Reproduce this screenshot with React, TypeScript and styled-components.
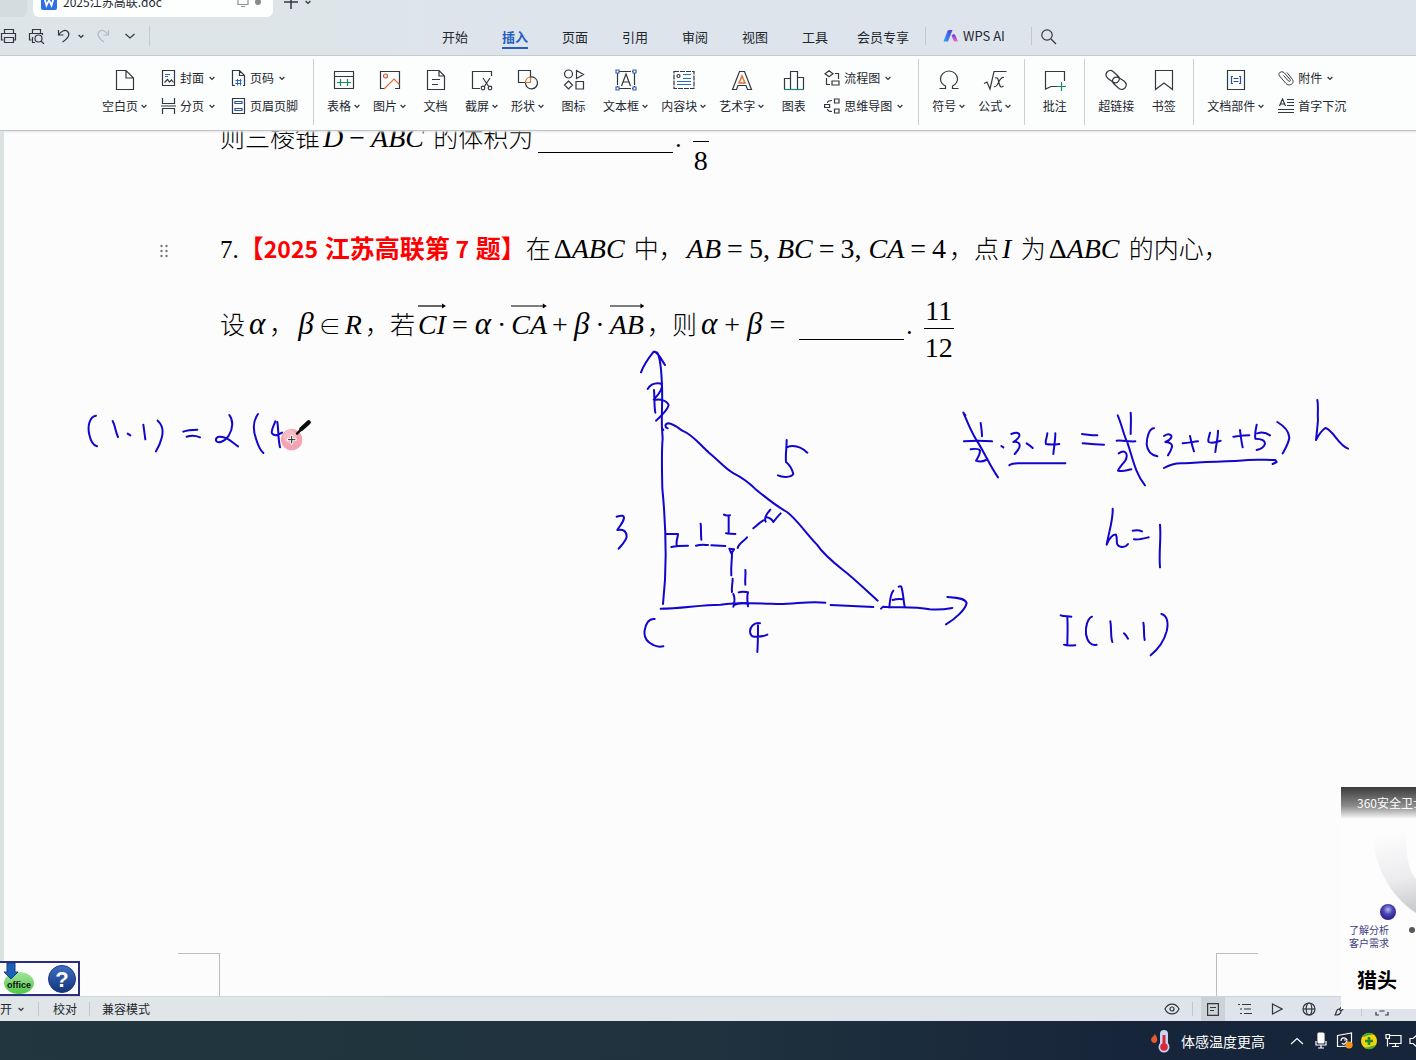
import React from "react";
import styled, { createGlobalStyle, css } from "styled-components";

const uiFont = `"Noto Sans CJK SC", "Noto Sans", sans-serif`;
const docFont = `"Liberation Serif", "Noto Sans CJK SC", serif`;
const ink = "#1206cc";
const line = "#33383f";

const GlobalStyle = createGlobalStyle`
  * { box-sizing: border-box; }
  body { margin: 0; background: #fcfcfd; overflow: hidden; }
  button { font: inherit; color: inherit; background: none; border: 0; padding: 0; margin: 0; cursor: pointer; }
  svg { display: block; flex: none; }
`;

const Window = styled.div`
  position: relative;
  display: flex;
  flex-direction: column;
  height: 100vh;
  overflow: hidden;
  font: 12px/18px ${uiFont};
  color: #23272e;
`;

/* ---------- title bar ---------- */
const TitleBar = styled.header`
  display: flex;
  align-items: flex-end;
  height: 17px;
  flex: none;
  overflow: hidden;
  background: linear-gradient(90deg, #dde5e8 0, #dde5e8 300px, #dee4ec 480px);
`;
const PreviousTab = styled.div`
  width: 27px;
  height: 30px;
  margin-right: 6px;
  border-radius: 0 0 6px 0;
  background: #d5dce0;
`;
const FileTab = styled.button`
  display: flex;
  align-items: center;
  gap: 6px;
  width: 240px;
  height: 30px;
  padding: 0 12px 0 8px;
  border-radius: 0 0 6px 6px;
  background: #fdfefe;
  text-align: left;
`;
const FileName = styled.span`
  flex: 1;
`;
const NewTab = styled.button`
  display: flex;
  align-items: center;
  gap: 6px;
  height: 30px;
  padding-left: 10px;
`;

/* ---------- menu bar ---------- */
const MenuBar = styled.div`
  display: flex;
  align-items: center;
  height: 39px;
  flex: none;
  border-bottom: 1px solid #c3c8cf;
  background: linear-gradient(90deg, #dde5e8 0, #dde5e8 300px, #dee4ec 480px);
  font-size: 13px;
`;
const QuickBar = styled.div`
  display: flex;
  align-items: center;
  width: 150px;
  height: 20px;
  gap: 11px;
  border-right: 1px solid #c5cbd1;
`;
const QuickButton = styled.button`
  display: flex;
  align-items: center;
  gap: 6px;
`;
const Menu = styled.nav`
  display: flex;
  align-items: center;
  height: 100%;
  margin-left: 275px;
`;
const MenuItem = styled.button<{ $active?: boolean }>`
  min-width: 60px;
  padding: 0 12px;
  line-height: 20px;
  white-space: nowrap;
  ${(p) =>
    p.$active &&
    css`
      color: #2460bd;
      font-weight: 700;
    `}
  span {
    display: inline-block;
    padding-top: 4px;
    border-bottom: 2px solid ${(p) => (p.$active ? "#2460bd" : "transparent")};
  }
`;
const Divider = styled.i<{ $h: number; $gap: number }>`
  width: 1px;
  height: ${(p) => p.$h}px;
  margin: 0 ${(p) => p.$gap}px;
  flex: none;
  background: #c3c8ce;
`;
const AiButton = styled.button`
  display: flex;
  align-items: center;
  gap: 4px;
  padding: 0 22px 0 13px;
  white-space: nowrap;
`;

/* ---------- ribbon ---------- */
const Ribbon = styled.div`
  position: relative;
  z-index: 1;
  display: flex;
  align-items: center;
  gap: 13px;
  height: 75px;
  flex: none;
  padding: 0 0 2px 102px;
  border-bottom: 1px solid #bfc3c7;
  box-shadow: 0 1px 2px #e4e5e7;
  background: #fcfdfd;
`;
const RibbonItem = styled.button`
  display: flex;
  flex-direction: column;
  align-items: center;
  gap: 6px;
  min-width: 33px;
  white-space: nowrap;
`;
const RibbonStack = styled.div`
  display: flex;
  flex-direction: column;
  gap: 10px;
  padding: 0 2px 0 1px;
`;
const RibbonRow = styled.button`
  display: flex;
  align-items: center;
  gap: 4px;
  white-space: nowrap;
`;
const Label = styled.span<{ $gap: number }>`
  display: flex;
  align-items: center;
  gap: ${(p) => p.$gap}px;
`;
const RibbonRule = styled.i`
  width: 1px;
  height: 66px;
  flex: none;
  background: #cdd0d4;
`;

/* ---------- document ---------- */
const Page = styled.main`
  position: relative;
  display: flex;
  flex-direction: column;
  flex: 1;
  min-height: 0;
  overflow: hidden;
  background: linear-gradient(90deg, #dbe2e1 4px, #fcfcfd 4px);
`;
const Body = styled.article`
  padding-left: 220px;
  margin-top: -30px;
  font: 300 25px/76px ${docFont};
  color: #000;
  white-space: nowrap;
`;
const Para = styled.p<{ $after?: number }>`
  position: relative;
  margin: 0 0 ${(p) => p.$after ?? 0}px;
  height: 76px;
`;
const M = styled.span`
  margin: 0 3px;
  font-size: 28px;
  line-height: 1;
`;
const Op = styled.span`
  margin: 0 6px;
`;
const Member = styled.span`
  margin: 0 4px;
  font-size: 22px;
`;
const Greek = styled.i`
  margin: 0 1px;
  font-size: 31px;
  line-height: 1;
`;
const Dot = styled.span`
  margin: 0 5px;
`;
const Source = styled.strong`
  color: #f00;
  font-family: "Noto Sans CJK SC", sans-serif;
  font-size: 25px;
  line-height: 1;
  font-weight: 700;
`;
const Digits = styled.span`
  margin-right: 1px;
  font-size: 23px;
`;
const Blank = styled.span<{ $w: number }>`
  display: inline-block;
  width: ${(p) => p.$w}px;
  height: 30px;
  margin: 0 2px 0 5px;
  vertical-align: -6px;
  border-bottom: 1px solid #000;
`;
const FracBox = styled.span`
  display: inline-flex;
  flex-direction: column;
  margin-left: 5px;
  vertical-align: middle;
  text-align: center;
  font-size: 28px;
  line-height: 38px;
  span {
    height: 36px;
    padding: 0 1px;
  }
  span + span {
    border-top: 1px solid #000;
  }
`;
const VecBox = styled.span`
  position: relative;
  svg {
    position: absolute;
    left: 0;
    top: -6px;
    width: 100%;
    height: 6px;
  }
`;
const Handle = styled.button`
  position: absolute;
  left: -60px;
  top: 32px;
`;
const CropRow = styled.div`
  display: flex;
  justify-content: space-between;
  margin-top: auto;
  padding: 0 158px 0 178px;
`;
const CropMark = styled.i<{ $side: "left" | "right" }>`
  width: 42px;
  height: 43px;
  border-top: 1px solid #bcbcbc;
  border-${(p) => p.$side}: 1px solid #bcbcbc;
`;
const InkLayer = styled.svg`
  position: absolute;
  top: 0;
  left: 0;
  pointer-events: none;
  fill: none;
  stroke: ${ink};
  stroke-width: 6;
  stroke-linecap: round;
  stroke-linejoin: round;
`;
const OfficeBar = styled.aside`
  position: absolute;
  left: 0;
  bottom: 0;
  display: flex;
  align-items: center;
  gap: 12px;
  width: 80px;
  height: 35px;
  padding-left: 3px;
  border: 2px solid #2c2f80;
  border-left: 0;
  background: #fdfdfe;
`;

/* ---------- status bar ---------- */
const StatusBar = styled.footer`
  display: flex;
  align-items: center;
  justify-content: space-between;
  height: 25px;
  flex: none;
  padding-right: 22px;
  border-top: 1px solid #cfd4d8;
  background: linear-gradient(90deg, #e0e5e7, #dfe4ec);
`;
const StatusGroup = styled.div<{ $gap: number }>`
  display: flex;
  align-items: center;
  gap: ${(p) => p.$gap}px;
`;
const StatusButton = styled.button`
  display: flex;
  align-items: center;
  gap: 6px;
`;
const ViewButton = styled.button<{ $active?: boolean }>`
  display: grid;
  place-items: center;
  width: 24px;
  height: 24px;
  background: ${(p) => (p.$active ? "#cdd2d8" : "transparent")};
`;

/* ---------- task bar ---------- */
const TaskBar = styled.footer`
  display: flex;
  align-items: center;
  justify-content: flex-end;
  height: 39px;
  flex: none;
  background: linear-gradient(90deg, #21363e, #1f323e 50%, #17253a 80%);
  color: #fff;
`;
const Weather = styled.button`
  display: flex;
  align-items: center;
  gap: 10px;
  margin-right: 20px;
  font-size: 14px;
  line-height: 20px;
  white-space: nowrap;
`;
const Tray = styled.div`
  display: flex;
  margin-right: -13px;
`;
const TrayButton = styled.button`
  display: grid;
  place-items: center;
  width: 24px;
  height: 39px;
`;

/* ---------- pop-up ---------- */
const Popup = styled.aside`
  position: absolute;
  z-index: 2;
  right: 0;
  bottom: 51px;
  width: 75px;
  height: 222px;
  overflow: hidden;
  background: #fdfdfe;
`;
const PopupTitle = styled.div`
  height: 32px;
  padding-left: 16px;
  background: linear-gradient(#3a3a3a, #8c8c8c 60%, #fdfdfe);
  color: #fff;
  line-height: 32px;
  white-space: nowrap;
`;
const PopupLink = styled.a`
  display: block;
  padding-left: 8px;
  color: #3d3a7c;
  font-size: 10px;
  line-height: 13px;
  text-decoration: none;
`;
const PopupArt = styled.svg`
  margin-bottom: -12px;
`;
const PopupHeadline = styled.a`
  display: block;
  padding: 16px 0 0 16px;
  color: #000;
  font-size: 20px;
  line-height: 30px;
  font-weight: 700;
  text-decoration: none;
`;

/* ---------- icons ---------- */
type IconProps = { w?: number; h?: number; children: React.ReactNode; color?: string };
const Icon = ({ w = 22, h = 22, children, color = line }: IconProps) => (
  <svg width={w} height={h} viewBox={`0 0 ${w} ${h}`} fill="none" stroke={color} strokeWidth="1.2" aria-hidden="true">
    {children}
  </svg>
);
const Chevron = () => (
  <Icon w={6} h={5}>
    <path d="M.6 1 3 3.4 5.4 1" strokeWidth="1.3" />
  </Icon>
);

const icons = {
  blank: (
    <Icon>
      <path d="M2.500 1.500H12L19.500 9V20.500H2.500ZM12 1.500V9H19.500" />
    </Icon>
  ),
  table: (
    <Icon>
      <path d="M1.500 2.500h19v17h-19zM1.500 7.500h19" />
      <path d="M4 13.500h14M7.500 10v7M14.500 10v7" stroke="#1c8a5a" />
    </Icon>
  ),
  picture: (
    <Icon>
      <path d="M6 19.500H1.500v-17h19v17H16" />
      <circle cx="6.500" cy="7" r="2" stroke="#d4562c" />
      <path d="M5 20 15 10l5.500 5.500" stroke="#d9713c" />
    </Icon>
  ),
  doc: (
    <Icon>
      <path d="M2.500 1.500H14L19.500 7V20.500H2.500ZM14 1.500V7H19.500M7 10.500h8M7 15.500h6" />
    </Icon>
  ),
  capture: (
    <Icon>
      <path d="M9 19.500H1.500v-17h19V7" />
      <path d="m12 9 6 9M19 9l-6 9" />
      <circle cx="12" cy="19" r="1.800" />
      <circle cx="19" cy="19" r="1.800" />
    </Icon>
  ),
  shape: (
    <Icon>
      <path d="M8 13.500H1.500v-12h12V8" />
      <path d="M13.500 8v5.500H8" stroke="#d9713c" />
      <path d="M13.500 8A6 6 0 1 1 8.500 14" />
      <path d="M8.500 13A6 6 0 0 1 13 8" stroke="#d9713c" />
    </Icon>
  ),
  glyphs: (
    <Icon>
      <circle cx="5.500" cy="5" r="4" />
      <path d="m13.500 1.500 7 4-7 4zM5.500 12l4 4-4 4-4-4zM13 12.500h7.500v7.500H13z" />
    </Icon>
  ),
  textbox: (
    <Icon>
      <path d="M4 2.500h14M4 19.500h14M2.500 4v14M19.500 4v14" strokeDasharray="12 1" />
      <path d="M6.500 17 11 5l4.500 12M8 13h6" />
      <g fill="#fff" stroke="#3a62b4">
        <path d="M1 1h3v3H1zM18 1h3v3h-3zM1 18h3v3H1zM18 18h3v3h-3z" />
      </g>
    </Icon>
  ),
  block: (
    <Icon>
      <path d="M1 2.500h20v17H1z" strokeDasharray="5 1" />
      <circle cx="5.500" cy="7" r="1.500" />
      <path d="M10 5.500h8M10 9.500h8M4 12.500h14M4 15.500h14" stroke="#2d66c4" />
    </Icon>
  ),
  art: (
    <Icon>
      <path d="M1.500 20.500 8.500 2.500h5l7 18h-4l-1.500-4H7l-1.500 4z" />
      <path d="m11 7 3 7H8z" stroke="#d97234" strokeWidth="1.500" />
      <path d="M1 20.500h5M16 20.500h5" />
    </Icon>
  ),
  chart: (
    <Icon>
      <path d="M1.500 20V9.500h6V20M7.500 20V2.500h7V20M14.500 8.500h6V20" />
      <path d="M1 20.500h20" stroke="#1c8a7a" />
    </Icon>
  ),
  omega: (
    <Icon>
      <path d="M1.500 19.500h6v-2.500C3.500 15 2.500 12.500 2.500 10a8.500 8 0 0 1 17 0c0 2.500-1 5-5 7v2.500h6" />
    </Icon>
  ),
  formula: (
    <Icon w={24}>
      <path d="M1 14.500l3-1.500 3 7 4-17.500h12.500" />
      <path d="M12 9c3-1 3 1 4 5s2 5 4.500 3M21 8.500c-3-1-5 4-6 6s-2 4-4 3" />
    </Icon>
  ),
  comment: (
    <Icon>
      <path d="M13 17.500H7L1.500 20V2.500h19V12" />
      <path d="M13 17.500h9M17.500 13v9" stroke="#1c8a5a" />
    </Icon>
  ),
  link: (
    <Icon w={24}>
      <path d="M11 14.500 4 9.500C-1 5 5-1 9 2.500l5 4.500c3 3 0 8-4 6.500" />
      <path d="M13 7.500l7 4.500c5 4 0 11-5 7.500l-5-4.500c-3-3-1-8 4-6.500" />
    </Icon>
  ),
  bookmark: (
    <Icon>
      <path d="M2.500 1.500h17v19L11 14l-8.500 6.500z" />
    </Icon>
  ),
  parts: (
    <Icon>
      <path d="M2.500 1.500h17v19h-17z" />
      <path d="M8 7.500H6.500v7H8M14 7.500h1.500v7H14M8.500 9.500h5M8.500 12.500h5" stroke="#2c4fa3" />
    </Icon>
  ),
  cover: (
    <Icon w={15} h={16}>
      <path d="M1.500.5h12v15h-12z" />
      <path d="M4 4.500h5M4 6.500h3" stroke="#2d66c4" />
      <path d="m3.500 12.500 3-3 2 2.500 2-2 2 2.500" />
    </Icon>
  ),
  split: (
    <Icon w={15} h={16}>
      <path d="M1.500 0v5.500h12V0M1.500 16v-5.500h12V16M0 8h15" />
    </Icon>
  ),
  number: (
    <Icon w={15} h={16}>
      <path d="M4 15.500H1.500V.5h7l5 5v10H12M8.500.5v5h5" />
      <path d="M4.500 10.500h6M4.500 13.500h6M6.500 9v6.500M9.500 9v6.500" stroke="#2d66c4" strokeWidth="1" />
    </Icon>
  ),
  headfoot: (
    <Icon w={15} h={16}>
      <path d="M1.500.5h12v15h-12z" />
      <path d="M4 3.500h7v2H4zM4 10.500h7v2H4z" stroke="#2d4f9e" />
    </Icon>
  ),
  flow: (
    <Icon w={16} h={16}>
      <path d="m5 .8 4 3-4 3-4-3zM11 3.500h3.500V9M2.500 8v6.500H6M8 11h7v4H8z" />
    </Icon>
  ),
  mind: (
    <Icon w={16} h={16}>
      <path d="M.6 6.500h5v3h-5zM10.500 1h4.500v4h-4.500zM10.500 11h4.500v4h-4.500zM3.500 5c0-2 2-2.500 4.500-2.500M3.500 11c0 2 2 2.500 4.500 2.500" />
    </Icon>
  ),
  clip: (
    <Icon w={16} h={16}>
      <path
        d="m5.500 5.500 5 5.500c1 1 2.500 0 1.500-1.500L6.500 3C3.500 0-.5 3 1.500 6L8 13.500c3 3.500 9 0 6.500-4L9 2.500"
        strokeWidth="1"
      />
    </Icon>
  ),
  dropcap: (
    <Icon w={16} h={16}>
      <path d="m1.500 8 3-7 3 7M2.500 6h4M9 1.500h7M9 4.500h7M9 7.500h7M0 11.500h16M0 14.500h16" />
    </Icon>
  ),
};

type Item = { icon: keyof typeof icons; text: string; drop?: boolean };
const Tool = ({ icon, text, drop }: Item) => (
  <RibbonItem>
    {icons[icon]}
    <Label $gap={3}>
      {text}
      {drop && <Chevron />}
    </Label>
  </RibbonItem>
);
const Stack = ({ items }: { items: Item[] }) => (
  <RibbonStack>
    {items.map((it) => (
      <RibbonRow key={it.text}>
        {icons[it.icon]}
        <Label $gap={5}>
          {it.text}
          {it.drop && <Chevron />}
        </Label>
      </RibbonRow>
    ))}
  </RibbonStack>
);

const Frac = ({ top, bottom }: { top: string; bottom: string }) => (
  <FracBox>
    <span>{top}</span>
    <span>{bottom}</span>
  </FracBox>
);
const Vec = ({ children, w }: { children: string; w: number }) => (
  <VecBox>
    <i>{children}</i>
    <svg viewBox={`0 0 ${w} 6`} preserveAspectRatio="none" aria-hidden="true">
      <path d={`M0 3H${w - 2}`} stroke="#000" strokeWidth="1.200" />
      <path d={`M${w - 4} .5 ${w} 3l-4 2.500z`} fill="#000" />
    </svg>
  </VecBox>
);

const Handwriting = () => (
  <InkLayer width="1416" height="865" viewBox="0 131 1416 865" aria-hidden="true">
    <svg x="60" y="390" width="280" height="90" viewBox="0 0 840 270">
      <path d="M108 77C88 80 82 110 88 134c4 18 12 32 23 35M158 93c8 14 8 32 16 48M203 131l8 5M250 104l6 44M293 92c14 12 18 30 12 52-4 16-10 28-17 40M370 125c12-5 26-6 42-6M380 140c14-4 26-4 40 2M508 75c12 16 12 40-2 62-12 18-34 26-38 14-2-12 16-14 32-6 12 6 22 16 34 24M594 72c-14 20-16 46-6 74 6 20 12 34 22 43M646 94c-6 16-14 28-10 36 6 8 18 6 30-2M652 96c4 26 2 50 8 76" />
      <circle cx="695" cy="149" r="32" fill="#f4a3b2" stroke="none" />
      <circle cx="690" cy="140" r="20" fill="#f8bcc6" stroke="none" />
      <path d="M684 149h22M695 138v22" stroke="#fff" strokeWidth="8" />
      <path d="M685 149h20M695 139v20" stroke="#222" strokeWidth="3" />
      <path d="m724 117 22-20" stroke="#0b0b0b" strokeWidth="13" />
      <path d="m711 131 12-12" stroke="#0b0b0b" strokeWidth="7" />
    </svg>
    <svg x="600" y="340" width="390" height="330" viewBox="0 0 1170 990">
      <path d="M123 97c8-22 22-42 38-62 10-2 20 18 34 40M172 38c12 22 12 60 14 100 2 50-2 90 0 128l2 30c-4 40-2 100-1 150 6 60 10 130 10 200 0 60-4 110-8 146" />
      <path d="M143 147c8-14 20-20 42-16 4 12-8 32-24 48M162 150c2 24 0 46 4 68M164 180c16-4 38 2 42 16-4 14-22 32-38 46M186 264l4 6" />
      <path d="M203 265c-10-4-8-14 2-15 16 2 30 14 42 22 34 14 52 42 80 66 30 24 46 46 74 62 24 12 46 28 64 46 24 20 60 50 96 70 30 22 58 66 90 98 20 30 50 54 78 76 34 26 70 62 104 92" />
      <path d="M182 806c60 0 120-12 180-12 60-8 120-4 176-2 50 0 90-10 138-4M692 795c44 2 86 4 128 6M843 806l6-6c50 4 90-2 140 8 24 2 46 0 68-4M1042 771c22 2 52 2 58 18-4 20-34 48-62 64" />
      <path d="M560 300c0 24-4 44-2 66 10 8 18 20 22 36-8 12-34 10-46 4M560 322c20-8 40-4 62 16M50 530c14-4 22-4 22 4-2 14-12 22-20 36 18-4 28 4 28 20-2 14-16 26-24 36" />
      <path d="M198 582h36c0 10-6 18-4 34M214 621c16-4 34-4 50-4M288 617c16-4 26-2 36-2M334 616l42 2M302 551c2 16 0 32 2 48M372 524c6 4 12 2 18 2M386 528v52M378 580c10 2 18 0 28 2M388 626l14 2-8 12zM413 624c2-12 18-20 28-32M460 565c10-8 16-16 30-24M497 545c-6-12 4-24 14-36M500 532c10 2 16 6 20 14 6-8 12-16 22-26" />
      <path d="M396 640c0 22-4 40-2 66M398 716c0 14-4 26-2 40M400 762c6 12 4 24 0 38M436 690c2 14-2 28 0 44M416 757c10-4 16-2 28 0-4 14-2 28 0 42M402 795c16-8 28-8 44-4" />
      <path d="M880 752c-10 12-10 30-12 50M896 740c4-2 6-2 8 0 6 20 6 40 10 60M878 780c12-4 22-4 32-2M164 837c-16-2-26 10-30 34-4 24 8 36 26 44 10 6 18 6 30 4M480 850c-18-4-30 12-30 24 0 12 6 18 20 16 14 0 24-2 32-6M474 856c0 24 0 52-2 80" />
    </svg>
    <svg x="940" y="390" width="430" height="280" viewBox="0 0 1290 840">
      <path d="M72 72c10 24 20 50 36 76 26 40 42 80 66 114" />
      <path d="M70 68l6 8M72 154c30-2 54-2 84 0M122 99c2 14 4 26 4 40M92 178c12-2 24-4 28 4 0 12-6 20-12 30 10 4 22 2 30-2M184 168l6 4M214 132c16-6 26-4 24 6-4 10-12 14-18 18 14-2 22 4 18 16-4 10-10 16-14 20M260 160c6 4 12 8 18 14M322 130c0 12-8 24-4 32 10 2 24 2 40 0M346 130c0 20-4 42-6 62M208 226c10-8 20-6 40-6h128M426 132c18 2 30 4 46 4M428 160c20 2 40 4 64 4" />
      <path d="M533 76c12 26 16 54 30 84 14 40 22 90 52 126M572 68c2 20 0 42 0 64M530 152c18-2 38 4 56 2M536 190c20-14 30 2 20 22-12 14-18 20-22 30 16 4 28-2 40-4" />
      <path d="M642 115c-14 0-22 26-22 48 2 20 14 32 32 36M672 138c12-8 24-6 22 4-4 8-12 12-18 14 16 0 24 8 18 20-2 10-8 14-10 20M728 160c18-2 30-4 46-6M750 138c4 16 6 30 12 46M810 128c-2 12-8 22-4 28 10 6 20 0 36-4M834 122c0 22-6 42-8 64M880 140c18-2 34-4 48-4M900 120c2 18 4 34 8 52M950 104c-4 18-6 30-4 42 18 0 32 6 28 18-4 10-14 14-24 16M952 130c12-4 24-4 38 6M1012 96c20 12 34 26 36 46-2 18-12 34-20 48M672 234c20-12 40-16 62-14 60-6 130-4 190-10 30-2 50 0 82 0l4 6-12 6" />
      <path d="M1132 30c4 20 0 40 2 60-2 24-4 42-6 60 8-16 16-28 28-36 22 4 38 50 68 62M518 356c2 32-12 72-18 108 6-16 18-32 28-30 6 14-4 34 14 36 8 2 16 0 22-8M578 422c10-2 20-2 28 2M582 448c14 2 28-2 44-6M660 404c4 40-4 84 0 128" />
      <path d="M362 676c10 4 20 2 32 4M382 684c2 28 0 54 0 80M372 764c10 4 22 2 34 2M456 680c-14 6-20 30-18 52 4 22 14 36 32 32M511 694c4 20 0 44 6 62M552 730c6 4 8 10 12 16M610 698c4 16 0 34 4 52M664 672c18 4 22 26 16 52-8 30-26 54-48 72" />
    </svg>
  </InkLayer>
);

const menuItems = ["开始", "插入", "页面", "引用", "审阅", "视图", "工具", "会员专享"];

export default function App() {
  return (
    <Window>
      <GlobalStyle />
      <TitleBar>
        <PreviousTab />
        <FileTab>
          <svg width="16" height="16" viewBox="0 0 16 16" aria-hidden="true">
            <rect width="16" height="16" rx="2" fill="#2f6fe4" />
            <path d="m3.500 4.500 2 7L8 6l2.500 5.500 2-7" fill="none" stroke="#fff" strokeWidth="1.800" />
          </svg>
          <FileName>2025江苏高联.doc</FileName>
          <Icon w={12} h={12} color="#8a9097">
            <path d="M1 0v8.500h10V0M4 10.500h4" />
          </Icon>
          <svg width="6" height="6" aria-hidden="true">
            <circle cx="3" cy="3" r="3" fill="#85898e" />
          </svg>
        </FileTab>
        <NewTab aria-label="新建">
          <Icon w={16} h={16}>
            <path d="M8 1v14M1 8h14" strokeWidth="1.500" />
          </Icon>
          <Chevron />
        </NewTab>
      </TitleBar>

      <MenuBar>
        <QuickBar>
          <QuickButton aria-label="打印">
            <Icon w={17} h={16}>
              <path d="M4.500 5V1.500h9V5M3.500 12H1.500V5.500h14V12h-2M4.500 9.500h9v5h-9z" />
            </Icon>
          </QuickButton>
          <QuickButton aria-label="打印预览">
            <Icon w={17} h={16}>
              <path d="M4.500 5V1.500h8V5M3.500 12H1.500V5.500h13V7M4.500 9v5.500H7" />
              <circle cx="10.500" cy="10.500" r="3.500" />
              <path d="m13 13 3 3" />
            </Icon>
          </QuickButton>
          <QuickButton aria-label="撤销">
            <Icon w={16} h={16}>
              <path d="M2.500 2v5h5M2.500 7C5 3 9 1.500 11 3c3 2 3 6-4.500 11" />
            </Icon>
            <Chevron />
          </QuickButton>
          <QuickButton aria-label="恢复">
            <Icon w={16} h={16} color="#b3bac1">
              <path d="M13.500 2v5h-5M13.500 7C11 3 7 1.500 5 3c-3 2-3 6 4 11" />
            </Icon>
          </QuickButton>
          <QuickButton aria-label="更多">
            <Icon w={16} h={8}>
              <path d="m3.500 2 4.500 4 4.500-4" />
            </Icon>
          </QuickButton>
        </QuickBar>
        <Menu>
          {menuItems.map((m) => (
            <MenuItem key={m} $active={m === "插入"}>
              <span>{m}</span>
            </MenuItem>
          ))}
          <Divider $h={18} $gap={4} />
          <AiButton>
            <svg width="16" height="14" viewBox="0 0 16 14" aria-hidden="true">
              <defs>
                <linearGradient id="aiBlue" x1="0" y1="1" x2="1" y2="0">
                  <stop offset="0" stopColor="#2aa4f4" />
                  <stop offset="1" stopColor="#5b35e0" />
                </linearGradient>
                <linearGradient id="aiPink" x1="0" y1="0" x2="0" y2="1">
                  <stop offset="0" stopColor="#5a3ee6" />
                  <stop offset="1" stopColor="#f46bb5" />
                </linearGradient>
              </defs>
              <path d="M.5 12.500 4.500 2Q5 1 6 1H9.500L5 12.500z" fill="url(#aiBlue)" />
              <path d="M8.500 6.500 10.500 5Q12 5 12.500 6.500L15 12.500H11z" fill="url(#aiPink)" />
            </svg>
            WPS AI
          </AiButton>
          <Divider $h={18} $gap={4} />
          <QuickButton aria-label="搜索">
            <Icon w={24} h={18}>
              <circle cx="11" cy="8" r="5.200" />
              <path d="m15 12 5 5" />
            </Icon>
          </QuickButton>
        </Menu>
      </MenuBar>

      <Ribbon>
        <Tool icon="blank" text="空白页" drop />
        <Stack items={[{ icon: "cover", text: "封面", drop: true }, { icon: "split", text: "分页", drop: true }]} />
        <Stack items={[{ icon: "number", text: "页码", drop: true }, { icon: "headfoot", text: "页眉页脚" }]} />
        <RibbonRule />
        <Tool icon="table" text="表格" drop />
        <Tool icon="picture" text="图片" drop />
        <Tool icon="doc" text="文档" />
        <Tool icon="capture" text="截屏" drop />
        <Tool icon="shape" text="形状" drop />
        <Tool icon="glyphs" text="图标" />
        <Tool icon="textbox" text="文本框" drop />
        <Tool icon="block" text="内容块" drop />
        <Tool icon="art" text="艺术字" drop />
        <Tool icon="chart" text="图表" />
        <Stack items={[{ icon: "flow", text: "流程图", drop: true }, { icon: "mind", text: "思维导图", drop: true }]} />
        <RibbonRule />
        <Tool icon="omega" text="符号" drop />
        <Tool icon="formula" text="公式" drop />
        <RibbonRule />
        <Tool icon="comment" text="批注" />
        <RibbonRule />
        <Tool icon="link" text="超链接" />
        <Tool icon="bookmark" text="书签" />
        <RibbonRule />
        <Tool icon="parts" text="文档部件" drop />
        <Stack items={[{ icon: "clip", text: "附件", drop: true }, { icon: "dropcap", text: "首字下沉" }]} />
      </Ribbon>

      <Page>
        <Body>
          <Para $after={35}>
            则三棱锥
            <M>
              <i>D</i>
              <Op>−</Op>
              <i>ABC</i>
            </M>{" "}
            的体积为
            <Blank $w={135} />. <Frac top={"\u00a0"} bottom="8" />
          </Para>
          <Para>
            <Handle aria-label="拖动段落">
              <svg width="8" height="14" fill="#777" aria-hidden="true">
                {[2, 7, 12].map((y) => (
                  <React.Fragment key={y}>
                    <circle cx="1.500" cy={y} r="1.200" />
                    <circle cx="6.500" cy={y} r="1.200" />
                  </React.Fragment>
                ))}
              </svg>
            </Handle>
            7.
            <Source>
              【<Digits>2025</Digits> 江苏高联第 <Digits>7</Digits> 题】
            </Source>
            在
            <M>
              Δ<i>ABC</i>
            </M>{" "}
            中，
            <M>
              <i>AB</i>
              <Op>=</Op>5, <i>BC</i>
              <Op>=</Op>3, <i>CA</i>
              <Op>=</Op>4
            </M>
            ，点
            <M>
              <i>I</i>
            </M>{" "}
            为
            <M>
              Δ<i>ABC</i>
            </M>{" "}
            的内心，
          </Para>
          <Para>
            设
            <M>
              <Greek>α</Greek>
            </M>
            ，
            <M>
              <Greek>β</Greek>
              <Member>∈</Member>
              <i>R</i>
            </M>
            ，若
            <M>
              <Vec w={28}>CI</Vec>
              <Op>=</Op>
              <Greek>α</Greek>
              <Dot>·</Dot>
              <Vec w={36}>CA</Vec>
              <Dot>+</Dot>
              <Greek>β</Greek>
              <Dot>·</Dot>
              <Vec w={36}>AB</Vec>
            </M>
            ，则
            <M>
              <Greek>α</Greek>
              <Op>+</Op>
              <Greek>β</Greek>
              <Op>=</Op>
            </M>
            <Blank $w={105} />. <Frac top="11" bottom="12" />
          </Para>
        </Body>
        <CropRow>
          <CropMark $side="right" />
          <CropMark $side="left" />
        </CropRow>
        <Handwriting />
        <OfficeBar>
          <svg width="32" height="31" viewBox="0 0 32 31" aria-hidden="true">
            <defs>
              <linearGradient id="green" x1="0" y1="0" x2="0" y2="1">
                <stop offset="0" stopColor="#a6e39a" />
                <stop offset="1" stopColor="#4cc94a" />
              </linearGradient>
            </defs>
            <ellipse cx="16" cy="20" rx="15" ry="11" fill="url(#green)" />
            <path d="M4 0h8v9h3l-7 7-7-7h3z" fill="#1c5fb4" stroke="#123f86" />
            <text x="16" y="25" textAnchor="middle" fontFamily="Liberation Sans" fontSize="9" fontWeight="700" fill="#111">
              office
            </text>
          </svg>
          <svg width="30" height="30" viewBox="0 0 30 30" aria-hidden="true">
            <defs>
              <linearGradient id="help" x1="0" y1="0" x2="0" y2="1">
                <stop offset="0" stopColor="#3f6fc6" />
                <stop offset="1" stopColor="#143478" />
              </linearGradient>
            </defs>
            <circle cx="15" cy="15" r="13.500" fill="url(#help)" stroke="#1c3a80" />
            <text x="15" y="23" textAnchor="middle" fontFamily="Liberation Sans" fontSize="22" fontWeight="700" fill="#fff">
              ?
            </text>
          </svg>
        </OfficeBar>
      </Page>

      <StatusBar>
        <StatusGroup $gap={12}>
          <StatusButton>
            开 <Chevron />
          </StatusButton>
          <Divider $h={14} $gap={2} />
          <StatusButton>校对</StatusButton>
          <Divider $h={14} $gap={0} />
          <StatusButton>兼容模式</StatusButton>
        </StatusGroup>
        <StatusGroup $gap={8}>
          <ViewButton aria-label="护眼模式">
            <Icon w={16} h={12}>
              <path d="M1 6C4-.5 12-.5 15 6 12 12.500 4 12.500 1 6z" />
              <circle cx="8" cy="6" r="2" />
            </Icon>
          </ViewButton>
          <Divider $h={14} $gap={0} />
          <ViewButton $active aria-label="页面视图">
            <Icon w={12} h={13}>
              <path d="M.6.600h10.800v11.800H.6zM3 4.500h6M3 7.500h4" />
            </Icon>
          </ViewButton>
          <ViewButton aria-label="大纲">
            <Icon w={14} h={12}>
              <path d="M0 1.500h2M4 1.500h9M2 6h2M6 6h7M2 10.500h2M6 10.500h8" />
            </Icon>
          </ViewButton>
          <ViewButton aria-label="阅读">
            <Icon w={12} h={12}>
              <path d="M1.500 1 11 6l-9.500 5z" />
            </Icon>
          </ViewButton>
          <ViewButton aria-label="网页视图">
            <Icon w={14} h={14}>
              <circle cx="7" cy="7" r="6" />
              <ellipse cx="7" cy="7" rx="2.800" ry="6" />
              <path d="M1 7h12" />
            </Icon>
          </ViewButton>
          <ViewButton aria-label="书写">
            <Icon w={14} h={14}>
              <path d="m5 8 5-6 2 2-5 5M5 7c-3 0-2 3-4 6 4 0 6-1 6-4z" />
            </Icon>
          </ViewButton>
          <Divider $h={14} $gap={0} />
          <ViewButton aria-label="全屏">
            <Icon w={14} h={14}>
              <path d="M1 4V1h3M10 1h3v3M13 10v3h-3M4 13H1v-3M4.500 9h5" />
            </Icon>
          </ViewButton>
        </StatusGroup>
      </StatusBar>

      <TaskBar>
        <Weather>
          <svg width="20" height="24" viewBox="0 0 20 24" aria-hidden="true">
            <path d="M3.500 5c3 2 4 8 .5 9-4 0-5-4-2.500-6 1-1 2-2 2-3z" fill="#e8582e" />
            <rect x="9" y="1" width="8" height="17" rx="4" fill="#c9d4ee" />
            <circle cx="13" cy="18" r="5.500" fill="#c9d4ee" />
            <circle cx="13" cy="18" r="3.800" fill="#d9263e" />
            <path d="M13 6v12" stroke="#d9263e" strokeWidth="3" />
          </svg>
          体感温度更高
        </Weather>
        <Tray>
          <TrayButton aria-label="显示隐藏的图标">
            <Icon w={14} h={8} color="#fff">
              <path d="m1 7 6-5.500L13 7" />
            </Icon>
          </TrayButton>
          <TrayButton aria-label="麦克风">
            <Icon w={12} h={17} color="#fff">
              <rect x="3" y="1" width="6" height="10" rx="1" fill="#fff" />
              <path d="M1 9v4h10V9M6 13v3M3 16h6" />
            </Icon>
          </TrayButton>
          <TrayButton aria-label="同步">
            <Icon w={18} h={17} color="#fff">
              <path d="M1.500 3.500 15.500 1v13l-14 .5zM5 9c0-4 5-4 6-1l-3 0M11 9c-1 3-4 4-5 2" />
              <circle cx="13" cy="13" r="3.600" fill="#f39419" stroke="none" />
            </Icon>
          </TrayButton>
          <TrayButton aria-label="360安全卫士">
            <svg width="18" height="18" viewBox="0 0 18 18" aria-hidden="true">
              <circle cx="9" cy="9" r="8" fill="#f3d40e" />
              <path d="M2 5A8 8 0 0 1 14 2.500C9 2 5 5 2 5zM16 13A8 8 0 0 1 4 15.500C9 16 13 13 16 13z" fill="#42b02c" />
              <path d="M9 5v8M5 9h8" stroke="#1e8a2e" strokeWidth="2.600" />
            </svg>
          </TrayButton>
          <TrayButton aria-label="网络">
            <Icon w={17} h={16} color="#fff">
              <path d="M5 2.500h11v8H4M10.500 10.500v3M7 13.500h7M1 1.500h3.500v4H1zM2.500 5.500v8" />
            </Icon>
          </TrayButton>
          <TrayButton aria-label="音量">
            <Icon w={16} h={16} color="#fff">
              <path d="M1 5.500h3L8 2v12L4 10.500H1z" />
            </Icon>
          </TrayButton>
        </Tray>
      </TaskBar>

      <Popup>
        <PopupTitle>360安全卫士</PopupTitle>
        <PopupArt width="75" height="116" viewBox="0 0 75 116" aria-hidden="true">
          <defs>
            <linearGradient id="swoosh" gradientUnits="userSpaceOnUse" x1="44" y1="14" x2="62" y2="92">
              <stop offset="0" stopColor="#fdfdfe" />
              <stop offset=".6" stopColor="#ececee" />
              <stop offset="1" stopColor="#cbccce" />
            </linearGradient>
            <radialGradient id="ball" cx=".5" cy=".35" r=".6">
              <stop offset="0" stopColor="#b9b8ee" />
              <stop offset=".5" stopColor="#4a43b4" />
              <stop offset="1" stopColor="#2a2488" />
            </radialGradient>
          </defs>
          <path d="M32 10C32 46 48 76 75 94V60C68 52 64 36 66 10z" fill="url(#swoosh)" />
          <circle cx="47" cy="93" r="8" fill="url(#ball)" />
          <circle cx="71" cy="111" r="3" fill="#55575c" />
        </PopupArt>
        <PopupLink href="#">
          了解分析
          <br />
          客户需求
        </PopupLink>
        <PopupHeadline href="#">猎头</PopupHeadline>
      </Popup>
    </Window>
  );
}
